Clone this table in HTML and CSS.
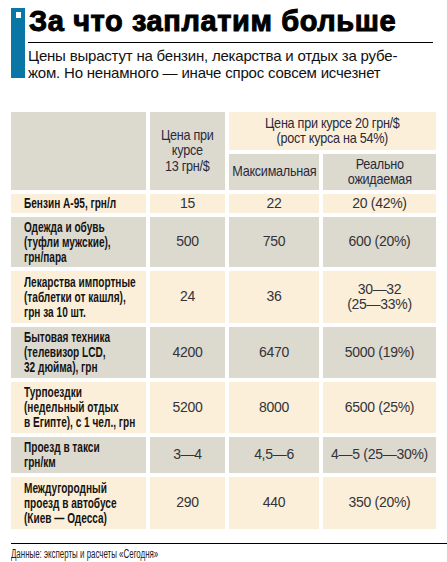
FILE: index.html
```html
<!DOCTYPE html>
<html lang="ru">
<head>
<meta charset="utf-8">
<title>За что заплатим больше</title>
<link rel="stylesheet" href="styles.css">
</head>
<body>
<div class="page">
  <header class="head">
    <div class="bar"><span class="sq"></span></div>
    <div class="head-text">
      <h1 class="title">За что заплатим больше</h1>
      <p class="lead">Цены вырастут на бензин, лекарства и отдых за рубе-<br>жом. Но ненамного — иначе спрос совсем исчезнет</p>
    </div>
  </header>

  <div class="grid">
    <div class="c gray h-corner"></div>
    <div class="c gray hd h-base"><span class="t">Цена при<br>курсе<br>13 грн/$</span></div>
    <div class="c beige hd h-top"><span class="t">Цена при курсе 20 грн/$<br>(рост курса на 54%)</span></div>
    <div class="c gray hd h-max"><span class="t">Максимальная</span></div>
    <div class="c gray hd h-real"><span class="t">Реально<br>ожидаемая</span></div>

    <div class="c beige name"><span class="t">Бензин А-95, грн/л</span></div>
    <div class="c beige num">15</div>
    <div class="c beige num">22</div>
    <div class="c beige num">20 (42%)</div>

    <div class="c gray name"><span class="t">Одежда и обувь<br>(туфли мужские),<br>грн/пара</span></div>
    <div class="c gray num">500</div>
    <div class="c gray num">750</div>
    <div class="c gray num">600 (20%)</div>

    <div class="c beige name"><span class="t">Лекарства импортные<br>(таблетки от кашля),<br>грн за 10 шт.</span></div>
    <div class="c beige num">24</div>
    <div class="c beige num">36</div>
    <div class="c beige num">30—32<br>(25—33%)</div>

    <div class="c gray name"><span class="t">Бытовая техника<br>(телевизор LCD,<br>32 дюйма), грн</span></div>
    <div class="c gray num">4200</div>
    <div class="c gray num">6470</div>
    <div class="c gray num">5000 (19%)</div>

    <div class="c beige name"><span class="t">Турпоездки<br>(недельный отдых<br>в Египте), с 1 чел., грн</span></div>
    <div class="c beige num">5200</div>
    <div class="c beige num">8000</div>
    <div class="c beige num">6500 (25%)</div>

    <div class="c gray name"><span class="t">Проезд в такси<br>грн/км</span></div>
    <div class="c gray num">3—4</div>
    <div class="c gray num">4,5—6</div>
    <div class="c gray num">4—5 (25—30%)</div>

    <div class="c beige name"><span class="t">Междугородный<br>проезд в автобусе<br>(Киев — Одесса)</span></div>
    <div class="c beige num">290</div>
    <div class="c beige num">440</div>
    <div class="c beige num">350 (20%)</div>
  </div>

  <footer class="src"><span class="t">Данные: эксперты и расчеты «Сегодня»</span></footer>
</div>
</body>
</html>
```

FILE: styles.css
```css
html, body {
  margin: 0;
  padding: 0;
  background: #ffffff;
}

.page {
  width: 447px;
  padding: 8px 0 0 11px;
  box-sizing: border-box;
  font-family: "Liberation Sans", Arial, sans-serif;
  color: #1a1a1a;
}

.head {
  display: flex;
  align-items: flex-start;
  gap: 3px;
}

.bar {
  width: 14px;
  height: 70px;
  background: #0a76a6;
  flex: none;
  display: flex;
  align-items: flex-start;
  padding: 4px 0 0 5px;
  box-sizing: border-box;
}

.sq {
  width: 5px;
  height: 6px;
  background: #ffffff;
}

.head-text {
  width: 405px;
}

.title {
  margin: 0;
  font-size: 29px;
  line-height: 26px;
  font-weight: 700;
  color: #000;
  padding: 0 0 8px 1px;
  border-bottom: 1px solid #000;
  -webkit-text-stroke: 1px #000;
  letter-spacing: 0.6px;
}

.lead {
  margin: 4px 0 0 0;
  font-size: 15px;
  line-height: 17px;
  letter-spacing: -0.2px;
  color: #111;
}

.grid {
  margin-top: 31px;
  display: grid;
  grid-template-columns: 135px 75px 90px 113px;
  grid-template-rows: 38px 36px 19px 50px 52px 51px 51px 36px 52px;
  gap: 4px;
}

.c {
  display: flex;
  align-items: center;
  justify-content: center;
  text-align: center;
  min-width: 0;
}

.t {
  display: inline-block;
  white-space: nowrap;
}

.gray { background: #dcd9cf; }
.beige { background: #fbefd9; }

.h-corner { grid-column: 1; grid-row: 1 / 3; }
.h-base { grid-column: 2; grid-row: 1 / 3; }
.h-top { grid-column: 3 / 5; grid-row: 1; }
.h-max { grid-column: 3; grid-row: 2; }
.h-real { grid-column: 4; grid-row: 2; }

.hd {
  font-size: 14.5px;
  line-height: 15.5px;
  letter-spacing: -0.3px;
  color: #2a2a3c;
}

.hd .t {
  transform: scaleX(0.87);
  transform-origin: center center;
}

.name {
  justify-content: flex-start;
  text-align: left;
  padding-left: 13px;
  font-weight: 700;
  font-size: 14px;
  line-height: 15px;
  color: #141414;
  overflow: visible;
}

.name .t {
  transform: scaleX(0.72);
  transform-origin: left center;
}

.num {
  font-size: 14px;
  line-height: 15.5px;
  letter-spacing: -0.3px;
  color: #333338;
}

.src {
  margin-top: 14px;
  border-top: 1px solid #000;
  padding-top: 3px;
  font-size: 12px;
  line-height: 14px;
  color: #222;
}

.src .t {
  transform: scaleX(0.66);
  transform-origin: left center;
}
```
